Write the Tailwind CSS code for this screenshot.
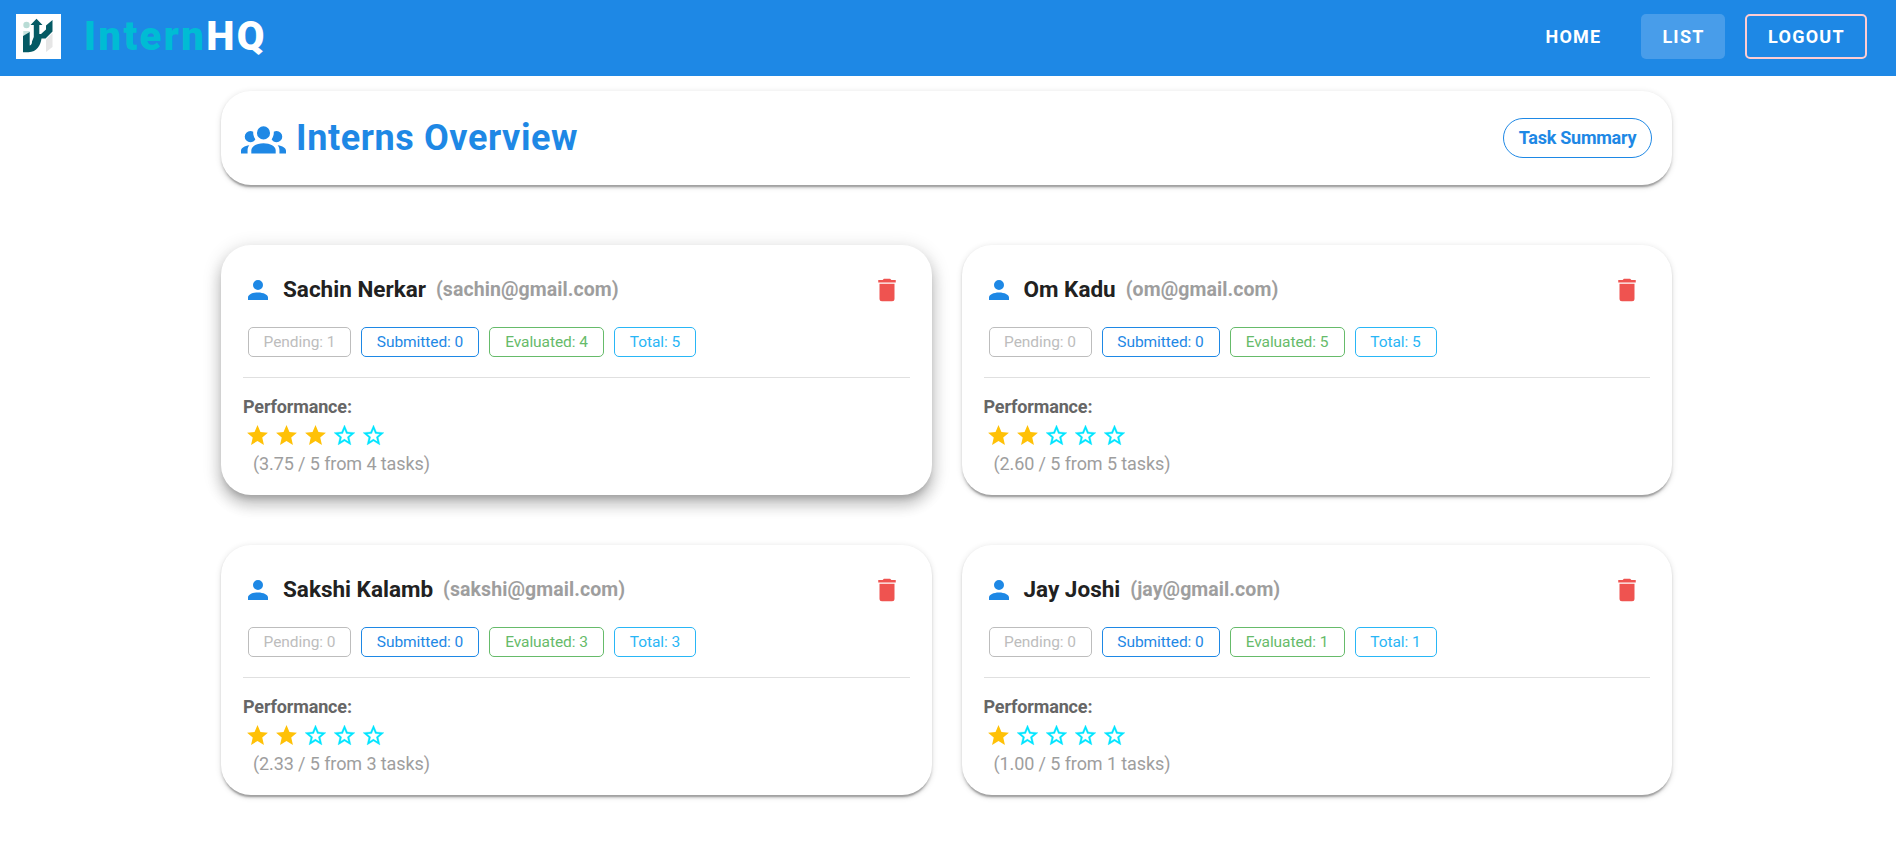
<!DOCTYPE html>
<html lang="en">
<head>
<meta charset="utf-8">
<title>InternHQ</title>
<script src="https://cdn.jsdelivr.net/npm/@tailwindcss/browser@4"></script>
</head>
<body class="h-[847px] overflow-hidden bg-white font-['Roboto',sans-serif] text-[#212121]">
<header class="flex h-[76px] items-center bg-[#1e88e5] pt-px pr-[29px] pb-[4px] pl-4">
  <svg class="size-[45px] shrink-0" viewBox="0 0 45 45">
    <path fill="#fff" d="M0 0H45V45H0Z"/>
    <circle cx="10.5" cy="11" r="3.2" fill="#b9dcd5"/>
    <path fill="#c9e4df" d="M7.3 17H13.700V19L7.3 22Z"/>
    <path fill="#e6e6e6" d="M30 25.500L36.500 19V33L30 38Z"/>
    <path fill="#055a64" d="M7 22L13.700 18V31.500C15.500 31 16 29.500 16 27.500L17.800 23V11H14.500L20.500 4.800L26.500 11H23.300V20H25L30 15.500V11.500L36.500 6V17.500L29.500 24.500H25.500C24.500 31.500 21 37.800 12.500 38.300H7Z"/>
  </svg>
  <h1 class="ml-[23px] text-[40px] leading-[50px] font-black tracking-[2.400px] text-white"><span class="text-[#00bcd4]">Intern</span>HQ</h1>
  <nav class="ml-auto flex h-[45px] items-center text-[18px] font-bold tracking-[1.250px] text-white">
    <a class="flex h-full w-[96px] items-center justify-center pl-px">HOME</a>
    <a class="ml-[20px] flex h-full w-[84px] items-center justify-center rounded-[5px] bg-[#489dea] pl-px">LIST</a>
    <a class="ml-[20px] flex h-full w-[122px] items-center justify-center rounded-[5px] border-2 border-[#ffcdd2] pl-px">LOGOUT</a>
  </nav>
</header>
<main class="mt-[15px] ml-[221px] w-[1451px]">
  <section class="flex h-[94px] items-center rounded-[30px] bg-white px-5 shadow-[0_3.75px_1.25px_-2.500px_rgba(0,0,0,0.2),0_2.500px_2.500px_0_rgba(0,0,0,0.14),0_1.25px_6.25px_0_rgba(0,0,0,0.12)]">
    <svg class="size-[45px] fill-[#1e88e5]" viewBox="0 0 24 24"><path d="M12,5.5A3.5,3.5 0 0,1 15.5,9A3.5,3.5 0 0,1 12,12.5A3.5,3.5 0 0,1 8.5,9A3.5,3.5 0 0,1 12,5.5M5,8C5.56,8 6.08,8.15 6.53,8.42C6.38,9.85 6.8,11.27 7.66,12.38C7.16,13.34 6.16,14 5,14A3,3 0 0,1 2,11A3,3 0 0,1 5,8M19,8A3,3 0 0,1 22,11A3,3 0 0,1 19,14C17.84,14 16.84,13.34 16.34,12.38C17.2,11.27 17.62,9.85 17.47,8.42C17.92,8.15 18.44,8 19,8M5.5,18.25C5.5,16.18 8.41,14.5 12,14.5C15.59,14.5 18.5,16.18 18.5,18.25V20H5.5V18.25M0,20V18.5C0,17.11 1.89,15.94 4.45,15.6C3.86,16.28 3.5,17.22 3.5,18.25V20H0M24,20H20.5V18.25C20.5,17.22 20.14,16.28 19.55,15.6C22.11,15.94 24,17.11 24,18.5V20Z"/></svg>
    <h2 class="ml-[10px] text-[36px] leading-[45px] font-bold tracking-[0.6px] text-[#1e88e5]">Interns Overview</h2>
    <button class="ml-auto h-[40px] w-[149px] rounded-full border border-[#1e88e5] pb-[2px] text-[18px] font-bold tracking-[-0.25px] text-[#1e88e5]">Task Summary</button>
  </section>
  <div id="cards" class="mt-[60px] grid grid-cols-2 gap-x-[30px] gap-y-[50px]"></div>
</main>
<script>
const interns = [
  ["Sachin Nerkar", "sachin@gmail.com", 1, 0, 4, 5, 3, "3.75"],
  ["Om Kadu", "om@gmail.com", 0, 0, 5, 5, 2, "2.60"],
  ["Sakshi Kalamb", "sakshi@gmail.com", 0, 0, 3, 3, 2, "2.33"],
  ["Jay Joshi", "jay@gmail.com", 0, 0, 1, 1, 1, "1.00"],
];
const raised = "shadow-[0_6.25px_6.25px_-3.75px_rgba(0,0,0,0.2),0_10px_12.500px_1.25px_rgba(0,0,0,0.14),0_3.75px_17.500px_2.500px_rgba(0,0,0,0.12)]";
const flat = "shadow-[0_3.75px_1.25px_-2.500px_rgba(0,0,0,0.2),0_2.500px_2.500px_0_rgba(0,0,0,0.14),0_1.25px_6.25px_0_rgba(0,0,0,0.12)]";
const star = '<svg class="size-[25px] fill-[#ffc107]" viewBox="0 0 24 24"><path d="M12,17.27L18.18,21L16.54,13.97L22,9.24L14.81,8.62L12,2L9.19,8.62L2,9.24L7.45,13.97L5.82,21L12,17.27Z"/></svg>';
const starOutline = '<svg class="size-[25px] fill-[#00e5ff] stroke-[#00e5ff] stroke-[0.3]" viewBox="0 0 24 24"><path d="M12,15.39L8.24,17.66L9.23,13.38L5.91,10.5L10.29,10.13L12,6.09L13.71,10.13L18.09,10.5L14.77,13.38L15.76,17.66M22,9.24L14.81,8.63L12,2L9.19,8.63L2,9.24L7.45,13.97L5.82,21L12,17.27L18.18,21L16.54,13.97L22,9.24Z"/></svg>';
document.getElementById("cards").innerHTML = interns.map(([name, mail, pending, submitted, evaluated, total, stars, score], i) => `
  <article class="h-[250px] rounded-[30px] bg-white px-[22px] pt-[24px] ${i === 0 ? raised : flat}">
    <div class="flex h-[41px] items-center pr-[8px]">
      <svg class="size-[30px] fill-[#1e88e5]" viewBox="0 0 24 24"><path d="M12,4A4,4 0 0,1 16,8A4,4 0 0,1 12,12A4,4 0 0,1 8,8A4,4 0 0,1 12,4M12,14C16.42,14 20,15.79 20,18V20H4V18C4,15.79 7.58,14 12,14Z"/></svg>
      <h3 class="mb-[2px] ml-[10px] text-[22.500px] leading-[32px] font-bold">${name}</h3>
      <span class="ml-[10px] text-[19.500px] leading-[30px] font-bold tracking-[0.08px] text-[#9e9e9e]">(${mail})</span>
      <svg class="ml-auto size-[30px] fill-[#ef5350]" viewBox="0 0 24 24"><path d="M19,4H15.5L14.5,3H9.5L8.5,4H5V6H19M6,19A2,2 0 0,0 8,21H16A2,2 0 0,0 18,19V7H6V19Z"/></svg>
    </div>
    <div class="mt-[17px] ml-[5px] flex gap-[10px] text-[15.500px] leading-[22px] tracking-[-0.07px]">
      <span class="h-[30px] w-[103px] rounded-[5px] border border-[#bdbdbd] pt-[3px] text-center text-[#bdbdbd]">Pending: ${pending}</span>
      <span class="h-[30px] w-[118px] rounded-[5px] border border-[#1e88e5] pt-[3px] text-center text-[#1e88e5]">Submitted: ${submitted}</span>
      <span class="h-[30px] w-[115px] rounded-[5px] border border-[#66bb6a] pt-[3px] text-center text-[#66bb6a]">Evaluated: ${evaluated}</span>
      <span class="h-[30px] w-[82px] rounded-[5px] border border-[#29b6f6] pt-[3px] text-center text-[#29b6f6]">Total: ${total}</span>
    </div>
    <hr class="mt-[20px] border-[#e0e0e0]">
    <p class="mt-[15px] text-[18px] leading-[28px] font-bold tracking-[-0.15px] text-[#666666]">Performance:</p>
    <div class="ml-[2px] flex h-[29px] items-center gap-[4px]">${star.repeat(stars)}${starOutline.repeat(5 - stars)}</div>
    <p class="ml-[10px] text-[18px] leading-[28px] tracking-[-0.1px] text-[#9e9e9e]">(${score} / 5 from ${evaluated} tasks)</p>
  </article>`).join("");
</script>
</body>
</html>
